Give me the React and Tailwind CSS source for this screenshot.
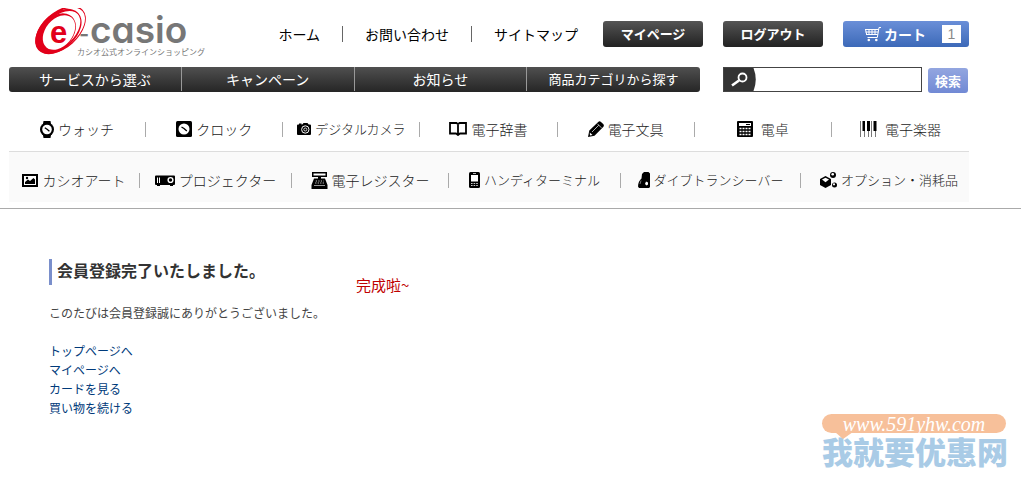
const jp = "font-['Noto_Sans_CJK_JP',sans-serif]";

const WatchIcon = () => (
  <svg width="14" height="17" viewBox="0 0 14 17" aria-hidden="true">
    <path d="M3.500 0h7l.6 3.500H2.900zM2.900 13.500h8.200l-.6 3.500h-7z" />
    <circle cx="7" cy="8.500" r="7" />
    <circle cx="7" cy="8.500" r="4.800" fill="#fff" />
    <path d="M4.800 6.800 7.400 8.400 9.400 10.200" fill="none" stroke="#000" strokeWidth="1.300" />
  </svg>
);

const ClockIcon = () => (
  <svg width="16" height="16" viewBox="0 0 16 16" aria-hidden="true">
    <rect width="16" height="16" rx="1.500" />
    <circle cx="8" cy="8" r="5.500" fill="#fff" />
    <path d="M5.500 6 8 7.500l2.800 2.500" fill="none" stroke="#000" strokeWidth="1.300" />
  </svg>
);

const CameraIcon = () => (
  <svg width="14" height="12" viewBox="0 0 14 12" aria-hidden="true">
    <path d="M1 1.500h1V.6h2.500v.9h.8L6.500 0h4l1.200 1.500H13a1 1 0 0 1 1 1V11a1 1 0 0 1-1 1H1a1 1 0 0 1-1-1V2.500a1 1 0 0 1 1-1z" />
    <circle cx="8.300" cy="6.500" r="3.700" fill="none" stroke="#fff" />
    <circle cx="8.300" cy="6.500" r="1.500" fill="none" stroke="#fff" strokeWidth=".8" />
  </svg>
);

const BookIcon = () => (
  <svg width="18" height="14" viewBox="0 0 18 14" aria-hidden="true">
    <path d="M1 1h6.500L9 2.200 10.500 1H17v10.500h-6L9 13l-2-1.500H1zM9 2v11" fill="#fff" stroke="#000" strokeWidth="1.800" />
  </svg>
);

const PencilIcon = () => (
  <svg width="16" height="16" viewBox="0 0 16 16" aria-hidden="true">
    <path d="M0 16 1.300 9.500 10.200.9a2 2 0 0 1 2.800 0l2.200 2.200a2 2 0 0 1 0 2.800L6.500 14.700z" />
    <path d="M4 11 10.800 4.200M9.400 2.800l4 4" stroke="#fff" strokeWidth=".7" fill="none" />
    <path d="M1.800 11.500 4.500 14l-2.500.6z" fill="#fff" />
  </svg>
);

const CalculatorIcon = () => (
  <svg width="16" height="16" viewBox="0 0 16 16" aria-hidden="true">
    <rect width="16" height="16" rx="1" />
    <path d="M2 2h12v3H2z" fill="#fff" />
    <path d="M2.500 7.500h11M2.500 10.500h11M2.500 13.500h11" stroke="#fff" strokeWidth="1.700" strokeDasharray="2 1" />
    <path d="M9 3.500h4" stroke="#000" />
  </svg>
);

const PianoIcon = () => (
  <svg width="17" height="16" viewBox="0 0 17 16" aria-hidden="true">
    <path d="M.5 0v16M4.500 9v7M8.500 9v7M11.500 0v16M15.500 9v7" stroke="#777" fill="none" />
    <path d="M2.500 0H5v10H2.500zM7 0h3v10H7zM13.500 0h3v10h-3z" />
  </svg>
);

const ArtIcon = () => (
  <svg width="16" height="13" viewBox="0 0 16 13" aria-hidden="true">
    <rect width="16" height="13" />
    <path d="M2 2h12v9H2z" fill="#fff" />
    <path d="M3 10V8l3-2.500L8 7l3.500-3L13 5.500V10z" />
    <circle cx="5" cy="4" r="1.200" />
  </svg>
);

const ProjectorIcon = () => (
  <svg width="20" height="11" viewBox="0 0 20 11" aria-hidden="true">
    <path d="M1 .5h18a1 1 0 0 1 1 1V9a1 1 0 0 1-1 1h-1v1h-3v-1H5v1H2v-1H1a1 1 0 0 1-1-1V1.500a1 1 0 0 1 1-1z" />
    <path d="M2.500 2.500v5.500M4.500 2.500v5.500" stroke="#fff" />
    <circle cx="15.500" cy="5" r="2.400" fill="none" stroke="#fff" strokeWidth="1.400" />
  </svg>
);

const RegisterIcon = () => (
  <svg width="17" height="17" viewBox="0 0 17 17" aria-hidden="true">
    <path d="M1 0h15v5h-6v1.500h4L16.500 13v4H.5v-4L3 6.500h4V5H1z" />
    <path d="M2.500 1.500h12v2h-12z" fill="#fff" />
    <path d="M4.800 9h8M4.200 11h9" stroke="#fff" strokeWidth=".8" strokeDasharray="1.200 1.300" />
    <path d="M3 13.500h11" stroke="#fff" strokeWidth=".6" />
  </svg>
);

const HandyIcon = () => (
  <svg width="11" height="16" viewBox="0 0 11 16" aria-hidden="true">
    <rect width="11" height="16" rx="1.500" />
    <path d="M2 3h7v6.500H2z" fill="#fff" />
    <path d="M4 1.500h3" stroke="#fff" strokeWidth=".7" />
    <path d="M2 11.500h7M2 13.500h7" stroke="#fff" strokeWidth=".8" strokeDasharray="1.600 1" />
  </svg>
);

const DiveIcon = () => (
  <svg width="12" height="16" viewBox="0 0 12 16" aria-hidden="true">
    <path d="M6 0h4.500L12 1.500V15l-1 1H1l-1-1.500C0 11 1.500 8 3.500 6.500L4 2z" />
    <path d="m8 9.500 2 1v2L8.500 13.500 7 12z" fill="#fff" />
    <path d="M3 8.500 2 12" stroke="#777" />
  </svg>
);

const OptionIcon = () => (
  <svg width="17" height="16" viewBox="0 0 17 16" aria-hidden="true">
    <path d="M5.500 4 11 7v6l-5.500 3L0 13V7z" />
    <path d="M5.500 5.700 9 7.500 5.500 10.300 2 7.500z" fill="#fff" />
    <circle cx="13" cy="3" r="3" />
    <circle cx="12.700" cy="2.200" r="1.300" fill="#fff" />
    <circle cx="14.500" cy="13" r="2.500" />
    <circle cx="14" cy="12.300" r="1.100" fill="#fff" />
  </svg>
);

const CartIcon = () => (
  <svg width="16" height="15" viewBox="0 0 16 15" aria-hidden="true" fill="none" stroke="#fff">
    <path d="M16 .5h-2L12.300 10.500H2.500M0 2.500h13.500M.5 5h12.700M1 7.500h11.700M.5 2.500l1.300 5.500M4 2.500v5.500M7 2.500v5.500M10 2.500v5.500" />
    <circle cx="3.800" cy="13" r="1.300" fill="#fff" stroke="none" />
    <circle cx="11.300" cy="13" r="1.300" fill="#fff" stroke="none" />
  </svg>
);

const Logo = () => (
  <svg width="172" height="52" viewBox="35 8 172 52" role="img" aria-label="e-casio">
    <g fill="#e2001a">
      <ellipse cx="60.500" cy="30" rx="30" ry="18" transform="rotate(-42 60.500 30)" />
      <ellipse cx="61.500" cy="29.800" rx="28" ry="16.300" transform="rotate(-42 61.500 29.800)" fill="#fff" />
      <ellipse cx="58.500" cy="31.300" rx="27" ry="17.500" transform="rotate(-43 58.500 31.300)" />
      <ellipse cx="60" cy="31" rx="24.500" ry="14.600" transform="rotate(-44 60 31)" fill="#fff" />
      <ellipse cx="56.500" cy="33" rx="22.500" ry="16" transform="rotate(-46 56.500 33)" />
      <ellipse cx="59" cy="32.500" rx="19.500" ry="13.500" transform="rotate(-50 59 32.500)" fill="#fff" />
    </g>
    <text x="50" y="43" fontSize="31" fontWeight="700" fill="#e2001a" fontFamily="Liberation Sans, sans-serif">e</text>
    <text fontWeight="600" fill="#777" fontFamily="Inter, sans-serif" className="[font-feature-settings:'cv11']">
      <tspan x="79" y="42" fontSize="22">-</tspan>
      <tspan x="90" y="43" fontSize="37">casio</tspan>
    </text>
    <text x="77" y="55" fontSize="8" fill="#777" fontFamily="Noto Sans CJK JP, sans-serif">カシオ公式オンラインショッピング</text>
  </svg>
);

const topLinks = ["ホーム", "お問い合わせ", "サイトマップ"];

const mainNav = [
  { label: "サービスから選ぶ", size: "text-[14px]" },
  { label: "キャンペーン", size: "text-[14px]" },
  { label: "お知らせ", size: "text-[14px]" },
  { label: "商品カテゴリから探す", size: "text-[13px]" },
];

const categories = [
  { label: "ウォッチ", Icon: WatchIcon, style: "gap-1 text-[14px]" },
  { label: "クロック", Icon: ClockIcon, style: "gap-1 text-[14px]" },
  { label: "デジタルカメラ", Icon: CameraIcon, style: "gap-1 text-[13px]" },
  { label: "電子辞書", Icon: BookIcon, style: "gap-1 text-[14px]" },
  { label: "電子文具", Icon: PencilIcon, style: "gap-1 text-[14px]" },
  { label: "電卓", Icon: CalculatorIcon, style: "gap-2 text-[14px]" },
  { label: "電子楽器", Icon: PianoIcon, style: "gap-2 text-[14px]" },
];

const subCategories = [
  { label: "カシオアート", Icon: ArtIcon, style: "gap-1 text-[14px]" },
  { label: "プロジェクター", Icon: ProjectorIcon, style: "gap-1 text-[14px]" },
  { label: "電子レジスター", Icon: RegisterIcon, style: "gap-1 text-[14px]" },
  { label: "ハンディターミナル", Icon: HandyIcon, style: "gap-1 text-[13px]" },
  { label: "ダイブトランシーバー", Icon: DiveIcon, style: "gap-1 text-[13px]" },
  { label: "オプション・消耗品", Icon: OptionIcon, style: "gap-1 pl-2 text-[13px]" },
];

const pageLinks = ["トップページへ", "マイページへ", "カードを見る", "買い物を続ける"];

const CategoryItem = ({ item, last }) => (
  <li className="flex h-11 items-center">
    <a href="#" className={`flex flex-1 items-center justify-center font-light whitespace-nowrap text-[#222] ${item.style}`}>
      <item.Icon />
      {item.label}
    </a>
    {!last && <span className="h-[15px] w-px bg-[#aaa]" />}
  </li>
);

const Header = () => (
  <header className="border-b border-[#aaa] pb-[6px]">
    <div className="ml-[9px] max-w-[960px]">
      <div className="flex items-center pt-2">
        <a href="#" className="ml-[26px]">
          <Logo />
        </a>
        <nav className="ml-auto flex items-center text-[14px] text-black">
          {topLinks.map((label, i) => (
            <div key={label} className="flex items-center">
              {i > 0 && <span className="mx-[22px] h-4 w-px bg-[#666]" />}
              <a href="#" className="whitespace-nowrap">{label}</a>
            </div>
          ))}
        </nav>
        <div className="ml-[25px] flex gap-5 text-[13px] font-bold text-white">
          <button className="h-[26px] w-[100px] rounded-[3px] bg-linear-to-b from-[#555] to-[#222]">マイページ</button>
          <button className="h-[26px] w-[100px] rounded-[3px] bg-linear-to-b from-[#555] to-[#222]">ログアウト</button>
          <button className="flex h-[26px] w-[126px] items-center rounded-[3px] bg-linear-to-b from-[#6a8fd8] to-[#3c69b8] pr-2 pl-[22px] text-[14px]">
            <CartIcon />
            <span className="ml-[3px]">カート</span>
            <span className="ml-auto flex h-[18px] w-[19px] items-center justify-center bg-white font-['Liberation_Sans',sans-serif] text-[14px] font-normal text-[#888]">1</span>
          </button>
        </div>
      </div>

      <div className="mt-[7px] flex items-start gap-[23px]">
        <nav className="flex-1">
          <ul className="grid h-[25px] grid-cols-4 divide-x divide-[#999] overflow-hidden rounded-[3px] bg-linear-to-b from-[#505050] to-[#262626] text-white">
            {mainNav.map(({ label, size }) => (
              <li key={label} className="flex h-6 items-center justify-center">
                <a href="#" className={`whitespace-nowrap ${size}`}>{label}</a>
              </li>
            ))}
          </ul>
        </nav>
        <form className="flex w-[246px] gap-[6px]">
          <div className="flex h-[25px] w-[199px] border border-[#444]">
            <label htmlFor="q" aria-label="検索">
              <svg width="32" height="23" viewBox="0 0 32 23" aria-hidden="true">
                <path d="M0 0h29.500q4.500 11.500 0 23H0z" fill="#333" />
                <circle cx="18.500" cy="9.500" r="4" fill="none" stroke="#fff" strokeWidth="1.800" />
                <path d="m15 12.500-7 5" stroke="#fff" strokeWidth="2.600" />
              </svg>
            </label>
            <input id="q" type="text" className="w-full min-w-0 px-1 text-[13px] outline-none" />
          </div>
          <button type="button" className="mt-px h-[25px] w-10 rounded-[3px] bg-linear-to-b from-[#93a6e0] to-[#7189d4] text-[13px] font-bold text-white">
            検索
          </button>
        </form>
      </div>

      <ul className="mt-[14px] grid grid-cols-7">
        {categories.map((item, i) => (
          <CategoryItem key={item.label} item={item} last={i === categories.length - 1} />
        ))}
      </ul>
      <ul className="grid grid-cols-[131fr_152fr_157fr_172fr_180fr_168fr] border-t border-[#ddd] bg-[#fafafa] pt-[6px]">
        {subCategories.map((item, i) => (
          <CategoryItem key={item.label} item={item} last={i === subCategories.length - 1} />
        ))}
      </ul>
    </div>
  </header>
);

const Watermark = () => (
  <div className="absolute right-[15px] bottom-[9px] w-[184px]">
    <div className="relative flex h-[19px] items-center justify-center rounded-full bg-[#f7c09a] font-['Liberation_Serif',serif] text-[20px] leading-none text-white italic">
      www.591yhw.com
      <svg width="18" height="7" viewBox="0 0 18 7" className="absolute top-[18px] left-[13px]" aria-hidden="true">
        <path d="M0 0h18L8 7z" fill="#f7c09a" />
      </svg>
    </div>
    <div className="text-center font-['Noto_Sans_CJK_SC',sans-serif] text-[31px] leading-[35px] font-black whitespace-nowrap text-[#a9cbe6]">
      我就要优惠网
    </div>
  </div>
);

export default function App() {
  return (
    <div className={`relative min-h-screen bg-white ${jp}`}>
      <Header />
      <main className="relative pt-[50px] pl-[49px] text-[12px] text-[#444]">
        <h1 className="border-l-[3px] border-[#7a8fcb] pb-1 pl-[5px] text-[16px] leading-[22px] font-bold text-[#333]">
          会員登録完了いたしました。
        </h1>
        <p className="mt-[18px] leading-[19px]">このたびは会員登録誠にありがとうございました。</p>
        <ul className="mt-[19px] leading-[19px] text-[#003a7a]">
          {pageLinks.map((label) => (
            <li key={label}>
              <a href="#">{label}</a>
            </li>
          ))}
        </ul>
        <p className="absolute top-[66px] left-[356px] font-['Noto_Sans_CJK_SC',sans-serif] text-[15px] leading-5 text-[#c00000]">
          完成啦~
        </p>
      </main>
      <Watermark />
    </div>
  );
}
